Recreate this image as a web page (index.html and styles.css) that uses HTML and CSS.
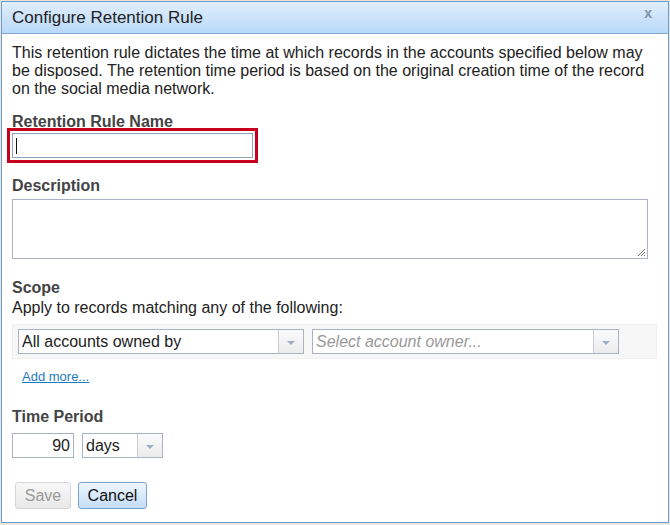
FILE: index.html
```html
<!DOCTYPE html>
<html>
<head>
<meta charset="utf-8">
<link rel="stylesheet" href="styles.css">
</head>
<body>
<div class="dialog">
  <div class="titlebar">
    <span class="title">Configure Retention Rule</span>
    <span class="close">x</span>
  </div>
  <div class="content">
    <p class="intro">This retention rule dictates the time at which records in the accounts specified below may be disposed. The retention time period is based on the original creation time of the record on the social media network.</p>

    <div class="label label-first">Retention Rule Name</div>
    <div class="name-input focused"><span class="caret"></span></div>

    <div class="label label-desc">Description</div>
    <div class="textarea"><svg class="grip" width="10" height="10" viewBox="0 0 10 10"><path d="M9 2 L2 9 M9 5 L5 9 M9 8 L8 9" stroke="#777" stroke-width="1" fill="none"/></svg></div>

    <div class="label label-scope">Scope</div>
    <div class="subtext">Apply to records matching any of the following:</div>
    <div class="scope-row">
      <div class="select sel-owned">
        <span class="sel-text">All accounts owned by</span>
        <span class="sel-arrow"><span class="tri"></span></span>
      </div>
      <div class="select sel-owner">
        <span class="sel-text placeholder">Select account owner...</span>
        <span class="sel-arrow"><span class="tri"></span></span>
      </div>
    </div>
    <a class="addmore" href="#">Add more...</a>

    <div class="label label-time">Time Period</div>
    <div class="time-row">
      <div class="num-input">90</div>
      <div class="select sel-days">
        <span class="sel-text">days</span>
        <span class="sel-arrow"><span class="tri"></span></span>
      </div>
    </div>

    <div class="buttons">
      <button class="btn btn-save">Save</button>
      <button class="btn btn-cancel">Cancel</button>
    </div>
  </div>
</div>
</body>
</html>
```
FILE: styles.css
```css
html, body {
  margin: 0;
  padding: 0;
}
body {
  background: #e6e6e6;
  font-family: "Liberation Sans", Arial, sans-serif;
  color: #222;
  width: 670px;
  height: 525px;
  overflow: hidden;
}
.dialog {
  margin: 1px 0 0 1px;
  width: 666px;
  height: 520px;
  border: 1px solid #6f9ac4;
  background: #fff;
  box-sizing: content-box;
}
.titlebar {
  height: 31px;
  border-bottom: 1px solid #7ea9d4;
  background: linear-gradient(#e0eefc, #b9d9fb);
  display: flex;
  align-items: center;
  justify-content: space-between;
  padding: 0 16px 0 10px;
}
.title {
  font-size: 17px;
  color: #222;
  padding-top: 1px;
}
.close {
  font-size: 14px;
  font-weight: bold;
  color: #8191a4;
  margin-top: -9px;
}
.content {
  padding: 10px 10px 0 10px;
  font-size: 16px;
}
.intro {
  margin: 0;
  line-height: 18px;
  width: 645px;
}
.label {
  font-weight: bold;
  color: #444;
  line-height: 18px;
}
.label-first { margin-top: 15px; }
.name-input {
  margin-top: 2px;
  width: 236px;
  height: 23px;
  border: 1px solid #8fa3bf;
  outline: 3px solid #c8001e;
  outline-offset: 2px;
  display: flex;
  align-items: center;
  padding-left: 3px;
  box-sizing: content-box;
}
.caret {
  width: 1px;
  height: 16px;
  background: #111;
}
.label-desc { margin-top: 19px; }
.textarea {
  margin-top: 4px;
  width: 634px;
  height: 58px;
  border: 1px solid #aab3c2;
  position: relative;
}
.grip {
  position: absolute;
  right: 1px;
  bottom: 1px;
}
.label-scope { margin-top: 20px; }
.subtext {
  margin-top: 2px;
  line-height: 18px;
}
.scope-row {
  margin-top: 7px;
  width: 638px;
  height: 33px;
  background: #f7f7f7;
  border: 1px solid #efefef;
  display: flex;
  align-items: center;
  padding-left: 5px;
  gap: 8px;
}
.select {
  height: 23px;
  border: 1px solid #aab3c2;
  background: #fff;
  display: flex;
  align-items: stretch;
}
.sel-text {
  flex: 1;
  padding-left: 3px;
  line-height: 23px;
  white-space: nowrap;
  overflow: hidden;
  color: #222;
}
.placeholder {
  color: #999;
  font-style: italic;
  padding-left: 3px;
}
.sel-arrow {
  width: 24px;
  border-left: 1px solid #c8ced8;
  background: linear-gradient(#fafafa, #ececec);
  display: flex;
  align-items: center;
  justify-content: center;
}
.tri {
  width: 0;
  height: 0;
  border-left: 4px solid transparent;
  border-right: 4px solid transparent;
  border-top: 4px solid #9aaecb;
  margin-top: 2px;
}
.sel-owned { width: 284px; }
.sel-owner { width: 305px; }
.addmore {
  display: inline-block;
  margin: 10px 0 0 10px;
  font-size: 13px;
  line-height: 16px;
  color: #1a7ac0;
  text-decoration: underline;
}
.label-time { margin-top: 23px; }
.time-row {
  margin-top: 7px;
  display: flex;
  gap: 8px;
}
.num-input {
  width: 57px;
  height: 23px;
  line-height: 23px;
  border: 1px solid #aab3c2;
  text-align: right;
  padding-right: 3px;
}
.sel-days { width: 79px; }
.buttons {
  margin-top: 24px;
  margin-left: 3px;
  display: flex;
  gap: 7px;
}
.btn {
  font-family: "Liberation Sans", Arial, sans-serif;
  font-size: 16px;
  height: 27px;
  border-radius: 3px;
  padding: 0 6px;
  cursor: default;
}
.btn-save {
  width: 56px;
  color: #999;
  border: 1px solid #d4d4d4;
  background: linear-gradient(#f8f8f8, #e8e8e8);
}
.btn-cancel {
  width: 69px;
  color: #111;
  border: 1px solid #7aa3cc;
  background: linear-gradient(#eef6ff, #c4ddf8);
}
```
